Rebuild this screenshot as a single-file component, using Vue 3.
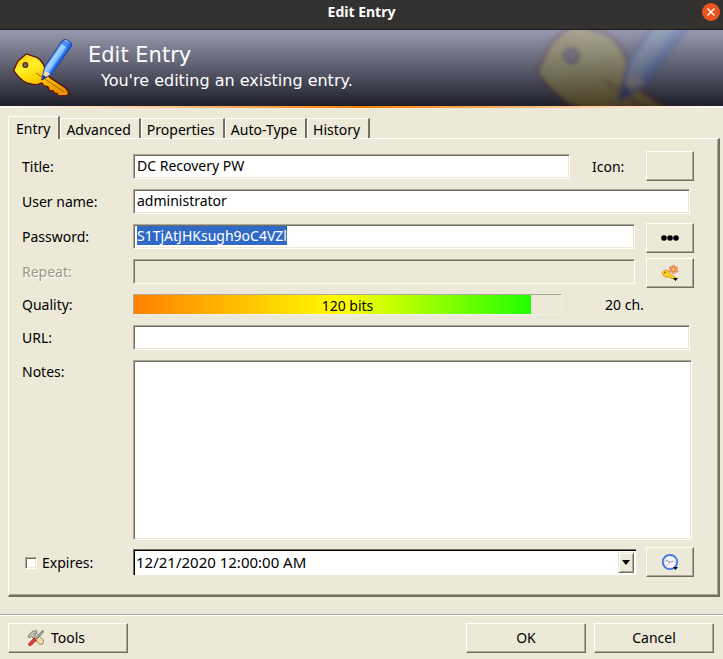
<script setup>
import { ref, onMounted } from 'vue'

const tabs = ['Entry', 'Advanced', 'Properties', 'Auto-Type', 'History']
const activeTab = ref('Entry')

const title = ref('DC Recovery PW')
const userName = ref('administrator')
const password = ref('S1TjAtJHKsugh9oC4VZl')
const repeat = ref('')
const url = ref('')
const notes = ref('')
const expires = ref(false)
const expiryDate = ref('12/21/2020 12:00:00 AM')

const bits = 120
const qualityPercent = 93

const passwordInput = ref(null)

onMounted(() => {
  passwordInput.value.focus()
  passwordInput.value.select()
})
</script>

<template>
  <div class="window">
    <svg class="defs" width="0" height="0" aria-hidden="true">
      <defs>
        <linearGradient id="keyFill" x1="0" y1="0" x2="0.6" y2="1">
          <stop offset="0" stop-color="#ffc814" />
          <stop offset="0.35" stop-color="#fff02a" />
          <stop offset="0.6" stop-color="#ffd000" />
          <stop offset="1" stop-color="#ec9400" />
        </linearGradient>
        <linearGradient id="penFill" gradientUnits="userSpaceOnUse" x1="154" y1="80" x2="184" y2="101">
          <stop offset="0" stop-color="#4c92f0" />
          <stop offset="0.2" stop-color="#a8d6ff" />
          <stop offset="0.5" stop-color="#7cbcff" />
          <stop offset="0.64" stop-color="#2b74f4" />
          <stop offset="1" stop-color="#0c3fd0" />
        </linearGradient>
        <symbol id="keyPencil" viewBox="36 20 180 180">
          <path
            d="M76 73 Q80 70 86 73 L112 82 Q124 90 130 102 L140 128 L150 142 L196 172 L206 186 L203 195 L176 197 L171 190 L163 188 L159 181 L149 182 L144 169 L132 167 L126 158 L112 163 Q86 162 70 152 Q52 138 41 121 L46 109 L54 92 Z"
            fill="url(#keyFill)"
            stroke="#5c140c"
            stroke-width="4"
            stroke-linejoin="round"
          />
          <circle cx="76" cy="104" r="7" fill="#6f6f7c" stroke="#5c2a08" stroke-width="4" />
          <path d="M108 128 L194 186" fill="none" stroke="#a86400" stroke-width="3" />
          <path
            d="M125 149 L134 110 L186 32 Q192 26 199 28 L210 34 Q217 40 214 48 L154 132 Z"
            fill="url(#penFill)"
            stroke="#1b3f9c"
            stroke-width="3"
            stroke-linejoin="round"
          />
          <path d="M126 147 L133 124 L143 125 L151 132 Z" fill="#f2d9ae" />
          <path d="M125 150 L130 134 L139 141 Z" fill="#102c9c" />
          <path d="M182 39 L190 30 L212 38 L213 48 L208 55 Z" fill="#1f63dc" opacity="0.6" />
        </symbol>
      </defs>
    </svg>

    <header class="titlebar">
      <span class="titlebar-text">Edit Entry</span>
      <button class="close" type="button" aria-label="Close">
        <svg viewBox="0 0 18 18" width="18" height="18">
          <circle cx="9" cy="9" r="9" fill="#e95420" />
          <path d="M5.500 5.500 L12.500 12.500 M12.500 5.500 L5.500 12.500" stroke="#fff" stroke-width="1.400" />
        </svg>
      </button>
    </header>

    <section class="banner">
      <svg class="banner-mark" aria-hidden="true"><use href="#keyPencil" /></svg>
      <svg class="banner-icon" aria-hidden="true"><use href="#keyPencil" /></svg>
      <div class="banner-text">
        <h1>Edit Entry</h1>
        <p>You're editing an existing entry.</p>
      </div>
    </section>
    <div class="banner-line"></div>

    <main class="body">
      <div class="tabs" role="tablist">
        <button
          v-for="tab in tabs"
          :key="tab"
          type="button"
          role="tab"
          class="tab"
          :class="{ active: tab === activeTab }"
          :aria-selected="tab === activeTab"
          @click="activeTab = tab"
        >{{ tab }}</button>
      </div>

      <form class="panel" @submit.prevent>
        <div class="row">
          <label class="label" for="title">Title:</label>
          <input id="title" v-model="title" class="field" type="text" />
          <label class="icon-label" for="icon">Icon:</label>
          <button id="icon" class="btn side" type="button"></button>
        </div>

        <div class="row">
          <label class="label" for="user">User name:</label>
          <input id="user" v-model="userName" class="field wide" type="text" />
        </div>

        <div class="row">
          <label class="label" for="password">Password:</label>
          <input id="password" ref="passwordInput" v-model="password" class="field beside" type="text" spellcheck="false" />
          <button class="btn side low" type="button" aria-label="Show password">
            <svg viewBox="0 0 18 6" width="18" height="6">
              <circle cx="3" cy="3" r="2.800" />
              <circle cx="9" cy="3" r="2.800" />
              <circle cx="15" cy="3" r="2.800" />
            </svg>
          </button>
        </div>

        <div class="row">
          <label class="label off" for="repeat">Repeat:</label>
          <input id="repeat" v-model="repeat" class="field beside" type="text" disabled />
          <button class="btn side low" type="button" aria-label="Generate password">
            <svg viewBox="0 0 18 18" width="18" height="18">
              <g fill="#f4a878" stroke="#dc6c48" stroke-width="0.700">
                <circle cx="12.500" cy="2.600" r="1.300" /><circle cx="15.200" cy="4" r="1.300" />
                <circle cx="15.400" cy="7" r="1.300" /><circle cx="12.500" cy="8.300" r="1.300" />
                <circle cx="9.800" cy="7" r="1.300" /><circle cx="9.800" cy="4" r="1.300" />
              </g>
              <circle cx="12.500" cy="5.400" r="2.200" fill="#ffc04a" stroke="#e07030" stroke-width="0.600" />
              <path d="M1.200 8.500 L3.500 6 L7 6.500 L8.500 9.500 L15 14 L14 15.500 L11 14.500 L8 13 L4 13 L2 11 Z" fill="#fbd31c" stroke="#d08a14" stroke-width="0.800" />
              <circle cx="4" cy="8.500" r="0.900" fill="#8a5a10" />
              <path d="M12 14 h5 l-2.500 3 z" fill="#000" />
            </svg>
          </button>
        </div>

        <div class="row quality">
          <span class="label">Quality:</span>
          <div class="meter" role="progressbar" aria-label="Quality" :aria-valuenow="qualityPercent">
            <div class="meter-fill" :style="{ width: qualityPercent + '%' }"></div>
            <span class="meter-text">{{ bits }} bits</span>
          </div>
          <span class="count">{{ password.length }} ch.</span>
        </div>

        <div class="row url">
          <label class="label" for="url">URL:</label>
          <input id="url" v-model="url" class="field wide" type="text" />
        </div>

        <div class="row notes-row">
          <label class="label" for="notes">Notes:</label>
          <textarea id="notes" v-model="notes" class="field notes"></textarea>
        </div>

        <div class="row expiry">
          <label class="label check">
            <input v-model="expires" type="checkbox" />
            <span>Expires:</span>
          </label>
          <div class="date">
            <input v-model="expiryDate" type="text" aria-label="Expiry date" />
            <button type="button" aria-label="Open calendar">
              <svg viewBox="0 0 8 5" width="8" height="5"><path d="M0 0 h8 l-4 5 z" /></svg>
            </button>
          </div>
          <button class="btn side" type="button" aria-label="Expiry presets">
            <svg viewBox="0 0 18 18" width="18" height="18">
              <circle cx="9" cy="9" r="7.200" fill="#f4f8ff" stroke="#3f74dc" stroke-width="1.800" />
              <circle cx="9" cy="9" r="5.600" fill="none" stroke="#a8b8d4" stroke-width="1" stroke-dasharray="1 1.930" />
              <path d="M4.500 7 L9 9.200 L12.500 8" fill="none" stroke="#8a90a0" stroke-width="1" />
              <path d="M9 9.200 L5.500 13" stroke="#f09090" stroke-width="1" />
              <path d="M12 14 h5 l-2.500 3 z" fill="#000" />
            </svg>
          </button>
        </div>
      </form>
    </main>

    <footer class="footer">
      <button class="btn action tools" type="button">
        <svg viewBox="0 0 18 18" width="18" height="18" aria-hidden="true">
          <path d="M6 5 L9 4 L13 8 L16.500 11 L16 15 L13 15.500 L9 12 Z" fill="#f0dca4" stroke="#94784a" stroke-width="0.800" />
          <path d="M1 7 L5 2.500 L9.500 1.500 L10 4 L7.500 5 L8.500 7 L6 9 L4.500 7.500 L2 9 Z" fill="#bcbcb8" stroke="#77756e" stroke-width="0.800" />
          <path d="M9 8.500 L14 3 L16 1.500 L16.500 3 L10 10 Z" fill="#a8b0b8" stroke="#55585c" stroke-width="0.700" />
          <path d="M1.500 15 L7 9 L9.500 11 L4 16.500 Q1.500 17.500 1.500 15 Z" fill="#e43c3c" stroke="#9c1c1c" stroke-width="0.800" />
        </svg>
        <span>Tools</span>
      </button>
      <span class="spacer"></span>
      <button class="btn action" type="button">OK</button>
      <button class="btn action" type="button">Cancel</button>
    </footer>
  </div>
</template>

<style>
body {
  background: #ece9d8;
}
</style>

<style scoped>
.window,
.window * {
  box-sizing: border-box;
}

.window {
  background: #ece9d8;
  color: #000;
  font-family: "Noto Sans", "Open Sans", sans-serif;
  font-size: 14px;
  line-height: 20px;
}

.defs {
  position: absolute;
}

button,
input,
textarea {
  margin: 0;
  padding: 0;
  border: 0;
  border-radius: 0;
  outline: 0;
  color: inherit;
  font: inherit;
}

.titlebar {
  display: grid;
  grid-template-columns: 21px 1fr 21px;
  height: 30px;
  padding-bottom: 6px;
  align-items: center;
  background: #343131;
  border-bottom: 1px solid #1c1c1c;
  color: #fff;
}

.titlebar-text {
  grid-column: 2;
  text-align: center;
  font-weight: 700;
}

.close {
  display: flex;
  width: 18px;
  height: 18px;
  background: none;
}

.banner {
  position: relative;
  display: flex;
  height: 76px;
  padding: 7px 12px;
  gap: 16px;
  overflow: hidden;
  background: linear-gradient(#989aaf, #1f1f2b);
  color: #fff;
  font-family: "DejaVu Sans", sans-serif;
}

.banner-icon {
  width: 60px;
  height: 60px;
}

.banner-mark {
  position: absolute;
  top: -57px;
  right: 14px;
  width: 177px;
  height: 177px;
  opacity: 0.18;
  filter: blur(2px);
}

.banner-text h1 {
  margin: 5px 0 0;
  font-size: 21px;
  font-weight: 400;
  line-height: 27px;
}

.banner-text p {
  margin: 0 0 0 13px;
  font-size: 16px;
  line-height: 24px;
}

.banner-line {
  height: 2px;
  background: linear-gradient(90deg, #fff, #ff8000 50%, #fff);
}

.body {
  padding: 8px 3px 17px 8px;
}

.tabs {
  display: flex;
  align-items: flex-end;
  height: 22px;
}

.tab {
  height: 20px;
  padding: 0 8px 0 5px;
  background: #ece9d8;
  border: 1px solid #fff;
  border-bottom: 0;
  border-right: 2px solid #716f64;
  border-top-left-radius: 2px;
  line-height: 21px;
}

.tab.active {
  z-index: 1;
  height: 23px;
  margin-bottom: -1px;
  padding: 0 8px 0 7px;
}

.panel {
  display: flex;
  flex-direction: column;
  gap: 5px;
  padding: 12px 24px 18px 13px;
  border: 1px solid #fff;
  border-right: 2px solid #716f64;
  border-bottom: 2px solid #716f64;
  box-shadow: inset -1px -1px #aca899;
}

.row {
  display: flex;
  align-items: center;
  height: 30px;
}

.quality {
  height: 26px;
}

.url {
  height: 26px;
  margin-top: 2px;
}

.label,
.icon-label {
  flex: 0 0 111px;
  padding-top: 2px;
}

.off {
  color: #9a9788;
  text-shadow: 1px 1px #fff;
}

.icon-label {
  flex-basis: 54px;
  margin-left: 22px;
}

.field {
  flex: 1;
  min-width: 0;
  height: 25px;
  padding: 0 3px 2px;
  background: #fff;
  border: 1px solid #fff;
  border-top-color: #aca899;
  border-left-color: #aca899;
  box-shadow: inset 1px 1px #716f64, inset -1px -1px #ece9d8;
}

.field:disabled {
  background: #ece9d8;
}

.field::selection {
  background: #316ac5;
  color: #fff;
}

.wide {
  margin-right: 4px;
}

.beside {
  margin-right: 11px;
}

.notes-row {
  height: auto;
  margin-top: 5px;
  align-items: flex-start;
}

.notes {
  height: 180px;
  margin-right: 2px;
  resize: none;
}

.expiry {
  margin-top: 2px;
}

.btn {
  display: flex;
  align-items: center;
  justify-content: center;
  height: 30px;
  background: #ece9d8;
  border: 1px solid #fff;
  border-right-color: #716f64;
  border-bottom-color: #716f64;
  box-shadow: inset -1px -1px #aca899;
}

.side {
  flex: 0 0 48px;
}

.low {
  align-self: flex-start;
  margin-top: 2px;
}

.meter {
  display: grid;
  flex: 1;
  height: 21px;
  margin-right: 43px;
  border: 1px solid #f4f2e8;
  border-top-color: #aca899;
  border-left-color: #aca899;
}

.meter-fill,
.meter-text {
  grid-area: 1 / 1;
  height: 19px;
}

.meter-fill {
  background: linear-gradient(90deg, #ff8000, #ffff00 53%, #20ff00);
}

.meter-text {
  padding-top: 1px;
  text-align: center;
}

.count {
  flex: 0 0 89px;
  padding-top: 2px;
}

.check {
  display: flex;
  align-items: center;
  gap: 5px;
  padding-left: 3px;
}

.check input {
  width: 12px;
  height: 12px;
  appearance: none;
  background: #fff;
  border: 1px solid #fff;
  border-top-color: #aca899;
  border-left-color: #aca899;
  box-shadow: inset 1px 1px #716f64, inset -1px -1px #ece9d8;
}

.check input:checked {
  background: #316ac5;
}

.date {
  display: flex;
  flex: 1;
  height: 26px;
  margin-right: 10px;
  padding: 2px;
  background: #fff;
  border-top: 1px solid #716f64;
  border-left: 1px solid #716f64;
  box-shadow: inset 1px 1px #000;
}

.date input {
  flex: 1;
  min-width: 0;
  padding-bottom: 2px;
  background: none;
  font-size: 15px;
}

.date button {
  display: flex;
  align-items: center;
  justify-content: center;
  width: 16px;
  background: #ece9d8;
  border: 1px solid #ece9d8;
  border-right-color: #716f64;
  border-bottom-color: #716f64;
  box-shadow: inset 1px 1px #fff, inset -1px -1px #aca899;
}

.footer {
  display: flex;
  gap: 8px;
  padding: 8px 9px 6px 8px;
  border-top: 1px solid #aca899;
  box-shadow: inset 0 1px #fff;
}

.spacer {
  flex: 1;
}

.action {
  flex: 0 0 120px;
}

.tools {
  justify-content: flex-start;
  gap: 6px;
  padding-left: 18px;
}
</style>
